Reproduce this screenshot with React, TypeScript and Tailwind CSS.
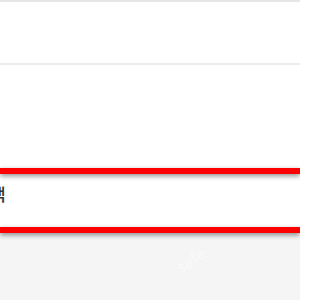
import React from "react";

export default function App() {
  return (
    <div className="w-[300px] h-[300px] overflow-hidden bg-white relative" style={{ fontFamily: '"Noto Sans", "Noto Sans CJK KR", sans-serif' }}>
      <div className="h-[2px] bg-[#e6e6e6]" />
      <div className="h-[63px] bg-white border-b-2 border-[#ececec]" />
      <div className="h-[103px] bg-white" />
      <div className="relative z-10 h-[6px] bg-[#ff0000] shadow-[0_2px_5px_rgba(0,0,0,0.45)]" />
      <div className="h-[53px] bg-white pt-[9px] overflow-hidden">
        <span className="block -ml-[10px] text-[17px] leading-[24px] font-medium text-[#333]">백</span>
      </div>
      <div className="relative z-10 h-[6px] bg-[#ff0000] shadow-[0_2px_5px_rgba(0,0,0,0.45)]" />
      <div className="h-[67px] bg-[#f5f5f5] relative overflow-hidden">
        <span className="absolute left-[175px] top-[15px] -rotate-[35deg] text-[16px] text-white/50">safe</span>
      </div>
    </div>
  );
}
